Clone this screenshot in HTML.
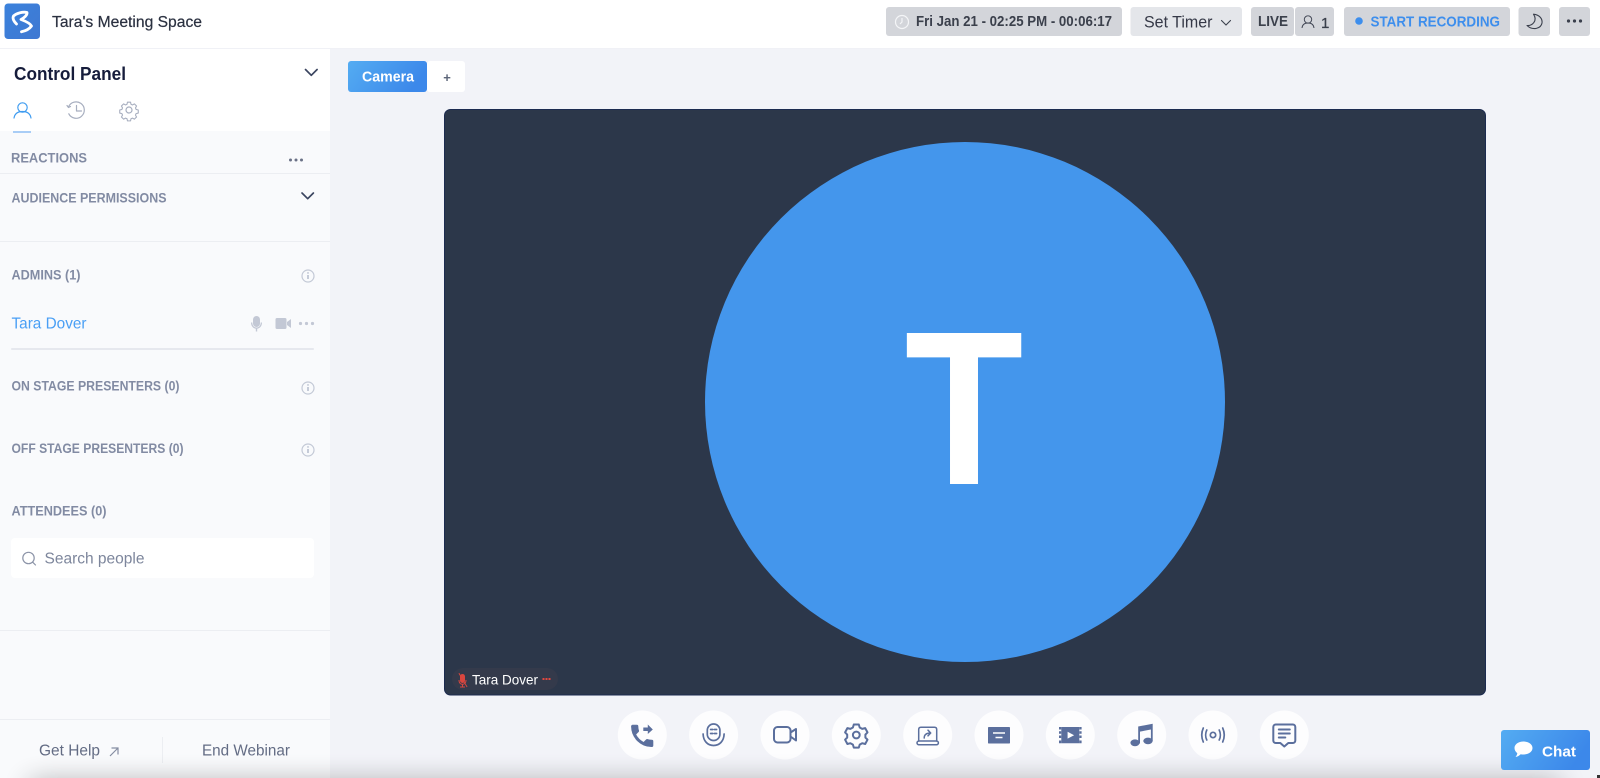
<!DOCTYPE html>
<html lang="en">
<head>
<meta charset="utf-8">
<title>Tara's Meeting Space</title>
<style>
html,body{margin:0;padding:0;width:1600px;height:778px;overflow:hidden;background:#f2f3f8}
svg{display:block}
text{font-family:"Liberation Sans",sans-serif;filter:url(#soft)}
.sec{font-size:13.5px;font-weight:700;fill:#828ba3}
.ic{fill:none;stroke:#5b6f9d;stroke-width:2;stroke-linecap:round;stroke-linejoin:round}
.fl{fill:#5b6f9d}
.info circle{fill:none;stroke:#c3c9d6;stroke-width:1.2}
.info path{stroke:#b4bbcb;stroke-width:1.5;fill:none}
</style>
</head>
<body>
<svg width="1600" height="778" viewBox="0 0 1600 778" xmlns="http://www.w3.org/2000/svg">
<defs>
<filter id="soft" x="-5%" y="-20%" width="110%" height="140%"><feGaussianBlur stdDeviation="0.25"/></filter>
<filter id="shade" x="-10%" y="-500%" width="120%" height="1100%"><feGaussianBlur stdDeviation="14"/></filter>
<linearGradient id="logoG" x1="0" y1="0" x2="1" y2="1"><stop offset="0" stop-color="#3b82dc"/><stop offset="1" stop-color="#3f78d2"/></linearGradient>
<linearGradient id="blueG" x1="0" y1="0" x2="1" y2="0.3"><stop offset="0" stop-color="#54acf2"/><stop offset="1" stop-color="#3c88ea"/></linearGradient>
</defs>

<!-- backgrounds -->
<rect width="1600" height="778" fill="#f2f3f8"/>

<!-- sidebar -->
<g id="sidebar">
<rect x="0" y="48" width="330" height="730" fill="#f9fafc"/>
<rect x="0" y="48" width="330" height="83" fill="#fff"/>
<text x="14" y="80" font-size="18" font-weight="700" fill="#141d3a" textLength="112" lengthAdjust="spacingAndGlyphs">Control Panel</text>
<path d="M305.500 69.500l5.800 5.800 5.800-5.800" fill="none" stroke="#3b4560" stroke-width="1.700" stroke-linecap="round" stroke-linejoin="round"/>
<!-- tabs -->
<g fill="none" stroke="#3d9bf0" stroke-width="1.150" stroke-linecap="round">
<circle cx="22.500" cy="107.500" r="4.700"/>
<path d="M14 118c.8-4.500 4.200-6.500 8.500-6.500s7.700 2 8.500 6.500"/>
</g>
<rect x="13" y="131" width="18" height="2" fill="#a9cdf6"/>
<g fill="none" stroke="#a7aebf" stroke-width="1.200" stroke-linecap="round" stroke-linejoin="round">
<path d="M68.500 107a8.200 8.200 0 1 1 .3 6.800"/>
<path d="M76.500 105.500v5.500h5"/>
<path d="M67 105.500l1.500 2 2-1"/>
<circle cx="129" cy="110" r="3"/>
<path d="M127.300 101.300h3.400l.5 2.300 1.700.8 2.100-1.200 2.400 2.400-1.200 2.100.7 1.700 2.400.6v3.400l-2.400.6-.7 1.700 1.200 2.100-2.400 2.400-2.100-1.200-1.700.7-.5 2.400h-3.400l-.5-2.400-1.700-.7-2.100 1.200-2.400-2.400 1.200-2.100-.7-1.700-2.400-.6v-3.400l2.400-.6.7-1.700-1.200-2.100 2.400-2.400 2.100 1.200 1.700-.8z" transform="translate(12.900 11) scale(.9)"/>
</g>
<!-- reactions -->
<text class="sec" x="11" y="162.500" textLength="76" lengthAdjust="spacingAndGlyphs">REACTIONS</text>
<g fill="#6a7186"><circle cx="290.500" cy="160" r="1.500"/><circle cx="296" cy="160" r="1.500"/><circle cx="301.500" cy="160" r="1.500"/></g>
<rect x="0" y="173" width="330" height="1" fill="#eceef2"/>
<text class="sec" x="11.500" y="202.500" textLength="155" lengthAdjust="spacingAndGlyphs">AUDIENCE PERMISSIONS</text>
<path d="M302 193l5.700 5.700 5.700-5.700" fill="none" stroke="#3b4560" stroke-width="1.700" stroke-linecap="round" stroke-linejoin="round"/>
<rect x="0" y="241" width="330" height="1" fill="#eceef2"/>
<!-- admins -->
<text class="sec" x="11.500" y="279.500" textLength="69" lengthAdjust="spacingAndGlyphs">ADMINS (1)</text>
<g class="info"><circle cx="308" cy="276" r="6"/><path d="M308 275v4M308 272.300v1.300"/></g>
<text x="11.500" y="328.500" font-size="16" fill="#4a9ff5" textLength="75" lengthAdjust="spacingAndGlyphs">Tara Dover</text>
<g fill="#c3c8d5">
<rect x="253" y="316" width="7" height="11" rx="3.500"/>
<path d="M251 322.500h1.300c0 3 1.700 5 4.200 5s4.200-2 4.200-5h1.300c0 3.400-2 5.800-4.800 6.200v2.800h-1.400v-2.800c-2.800-.4-4.800-2.800-4.800-6.200z"/>
<rect x="275.500" y="318" width="11" height="11" rx="1.500"/>
<path d="M287 322l4-3v9l-4-3z"/>
<circle cx="300.500" cy="323.500" r="1.600"/><circle cx="306.500" cy="323.500" r="1.600"/><circle cx="312.500" cy="323.500" r="1.600"/>
</g>
<rect x="11" y="348" width="303" height="2" rx="1" fill="#e6e8ee"/>
<text class="sec" x="11.500" y="390.500" textLength="168" lengthAdjust="spacingAndGlyphs">ON STAGE PRESENTERS (0)</text>
<g class="info"><circle cx="308" cy="388" r="6"/><path d="M308 387v4M308 384.300v1.300"/></g>
<text class="sec" x="11.500" y="453" textLength="172" lengthAdjust="spacingAndGlyphs">OFF STAGE PRESENTERS (0)</text>
<g class="info"><circle cx="308" cy="450" r="6"/><path d="M308 449v4M308 446.300v1.300"/></g>
<text class="sec" x="11.500" y="515.500" textLength="95" lengthAdjust="spacingAndGlyphs">ATTENDEES (0)</text>
<!-- search -->
<rect x="11" y="538" width="303" height="40" rx="4" fill="#fff"/>
<g fill="none" stroke="#8b93a7" stroke-width="1.200" stroke-linecap="round"><circle cx="28.500" cy="558" r="5.700"/><path d="M32.800 562.300l2.700 2.700"/></g>
<text x="44.500" y="563.500" font-size="15.500" fill="#7d869c" textLength="100" lengthAdjust="spacingAndGlyphs">Search people</text>
<rect x="0" y="630" width="330" height="1" fill="#eceef2"/>
<!-- footer -->
<rect x="0" y="719" width="330" height="1" fill="#eceef2"/>
<rect x="162" y="737" width="1" height="26" fill="#eceef2"/>
<text x="39" y="755.500" font-size="15.500" fill="#636c84" textLength="61" lengthAdjust="spacingAndGlyphs">Get Help</text>
<path d="M110 756l8-8M111.500 748h6.500v6.500" fill="none" stroke="#858da2" stroke-width="1.200"/>
<text x="202" y="755.500" font-size="15.500" fill="#636c84" textLength="88" lengthAdjust="spacingAndGlyphs">End Webinar</text>
</g>

<!-- topbar -->
<g id="topbar">
<rect width="1600" height="48" fill="#fff"/>
<rect x="0" y="48" width="1600" height="1" fill="#f0f1f6"/>
<rect x="4.500" y="3.500" width="35.500" height="35.500" rx="3.500" fill="url(#logoG)"/>
<path d="M16.500 24C13.500 21 12.500 18 13.500 16C17 13 23 11.500 27 12.500C27.500 15 24 18 21 19.500C25 21 30 23 31.500 26C29 29.500 25 31 21.500 31.800" fill="none" stroke="#fff" stroke-width="2.800" stroke-linejoin="round" stroke-linecap="round"/>
<text x="52" y="27" font-size="15.500" fill="#2b3040" stroke="#2b3040" stroke-width=".2" textLength="150" lengthAdjust="spacingAndGlyphs">Tara's Meeting Space</text>

<rect x="886" y="7" width="236" height="29" rx="3" fill="#d3d5da"/>
<g fill="none" stroke="#f4f5f7" stroke-width="1.200"><circle cx="902" cy="22" r="6.500"/><path d="M902 18v4l-2 2"/></g>
<text x="916" y="26" font-size="15" font-weight="700" fill="#3a3f4c" textLength="196" lengthAdjust="spacingAndGlyphs">Fri Jan 21 - 02:25 PM - 00:06:17</text>

<rect x="1130.500" y="7" width="111.500" height="29" rx="3" fill="#e4e6ea"/>
<text x="1144" y="27.500" font-size="17" fill="#343946" textLength="68.500" lengthAdjust="spacingAndGlyphs">Set Timer</text>
<path d="M1221.500 20.500l4.500 4.500 4.500-4.500" fill="none" stroke="#3a3f4c" stroke-width="1.100" stroke-linecap="round"/>

<rect x="1251" y="7" width="43" height="29" rx="3" fill="#d3d5da"/>
<rect x="1295" y="7" width="39" height="29" rx="3" fill="#d3d5da"/>
<text x="1258" y="26" font-size="15" font-weight="700" fill="#3a3f4c" textLength="30" lengthAdjust="spacingAndGlyphs">LIVE</text>
<g fill="none" stroke="#3f4452" stroke-width=".95"><circle cx="1308" cy="19.500" r="3.700"/><path d="M1302 28c.4-3.500 2.800-5 6-5s5.600 1.500 6 5"/></g>
<text x="1321" y="28" font-size="15" fill="#3a3f4c" stroke="#3a3f4c" stroke-width=".25">1</text>

<rect x="1344" y="7" width="166" height="29" rx="3" fill="#d3d5da"/>
<circle cx="1359" cy="21" r="3.800" fill="#3d8eed"/>
<text x="1370.500" y="26.500" font-size="15" font-weight="700" fill="#3d8eed" textLength="129.500" lengthAdjust="spacingAndGlyphs">START RECORDING</text>

<rect x="1518.500" y="7" width="31.500" height="29" rx="3" fill="#d3d5da"/>
<path d="M1533.500 14.200C1540 15 1542.500 19 1542 23C1541 28.500 1533 31 1527 25.500C1532 26 1538 21 1533.500 14.200z" fill="none" stroke="#3a3f4c" stroke-width="1.100" stroke-linejoin="round"/>
<rect x="1559" y="7" width="31" height="29" rx="3" fill="#d3d5da"/>
<g fill="#3a3f4c"><circle cx="1568.500" cy="21" r="1.600"/><circle cx="1574.500" cy="21" r="1.600"/><circle cx="1580.500" cy="21" r="1.600"/></g>
</g>

<!-- stage tabs -->
<rect x="427" y="61" width="38" height="31" rx="3" fill="#fff"/>
<rect x="348" y="61" width="79" height="31" rx="3" fill="url(#blueG)"/>
<text x="362" y="81.500" font-size="15" font-weight="700" fill="#fff" textLength="52" lengthAdjust="spacingAndGlyphs">Camera</text>
<text x="447" y="82" font-size="13" font-weight="700" fill="#5d6679" text-anchor="middle">+</text>

<!-- video -->
<rect x="444.500" y="109.500" width="1041" height="585.500" rx="6" fill="#2c374a" stroke="#1c2b50" stroke-width="1"/>
<circle cx="965" cy="402" r="260" fill="#4496ec"/>
<g filter="url(#soft)"><text transform="translate(964 484) scale(.885 1)" text-anchor="middle" font-size="219.500" font-weight="700" fill="#fff" style="filter:none">T</text></g>
<rect x="452" y="668" width="106" height="22" rx="11" fill="#343a4b"/>
<g fill="#d9463f"><rect x="460" y="674" width="5" height="9" rx="2.500"/><path d="M458.500 680h1c0 2.500 1.200 3.800 3 3.800s3-1.300 3-3.800h1c0 3-1.500 4.500-3.500 4.700v1.800h2v1h-5v-1h2v-1.800c-2-.2-3.500-1.700-3.500-4.700z"/><path d="M458.500 673.500l.8-.6 8.200 13.800-.8.600z"/></g>
<text x="472" y="684.500" font-size="14" fill="#fff" textLength="66" lengthAdjust="spacingAndGlyphs">Tara Dover</text>
<g fill="#e2483f"><rect x="542.500" y="678" width="2" height="2"/><rect x="545.500" y="678" width="2" height="2"/><rect x="548.500" y="678" width="2" height="2"/></g>

<!-- bottom controls -->
<g fill="#fdfdfe">
<circle cx="642.300" cy="735" r="24.500"/><circle cx="713.600" cy="735" r="24.500"/><circle cx="785" cy="735" r="24.500"/><circle cx="856.300" cy="735" r="24.500"/><circle cx="927.700" cy="735" r="24.500"/><circle cx="999" cy="735" r="24.500"/><circle cx="1070.300" cy="735" r="24.500"/><circle cx="1141.700" cy="735" r="24.500"/><circle cx="1213" cy="735" r="24.500"/><circle cx="1284.300" cy="735" r="24.500"/>
</g>
<!-- phone -->
<g transform="translate(642.300 735)">
<path class="fl" stroke="#5b6f9d" stroke-width=".5" stroke-linejoin="round" transform="translate(-14.500 -13.500) scale(1.200)" d="M6.620 10.790c1.440 2.830 3.760 5.140 6.590 6.590l2.200-2.200c.27-.27.670-.36 1.020-.24 1.120.37 2.330.57 3.570.57.550 0 1 .45 1 1V20c0 .55-.45 1-1 1-9.390 0-17-7.610-17-17 0-.55.45-1 1-1h3.500c.55 0 1 .45 1 1 0 1.250.2 2.450.57 3.570.11.350.03.740-.25 1.020l-2.200 2.200z"/>
<path class="fl" d="M1-7.500h4.500V-10.500L10.500-5.500 5.500-1V-4H1z"/>
</g>
<!-- mic -->
<g transform="translate(713.600 735)" class="ic" style="stroke-width:1.700">
<rect x="-6.300" y="-11" width="12.600" height="16.500" rx="6.300"/>
<path d="M-3-5.500H-.8M.8-5.500H3M-3-1.500H-.8M.8-1.500H3"/>
<path d="M-10.500-1C-10.300 6-6 10.500 0 10.500S10.300 6 10.500-1"/>
</g>
<!-- camera -->
<g transform="translate(785 735)" class="ic">
<rect x="-11" y="-8" width="16.500" height="15.500" rx="3.500"/>
<path d="M5.500-2.500L11-6v11.500L5.500 1.500"/>
</g>
<!-- gear -->
<g transform="translate(856.300 735)" class="ic">
<circle cx="0" cy="0" r="3.400"/>
<path d="M-2.500-10.500h5l.9 3 2.500 1.400 3-.8 2.300 4.300-2.100 2.200v2.900l2.100 2.200-2.300 4.300-3-.8-2.500 1.400-.9 3h-5l-.9-3-2.500-1.400-3 .8-2.300-4.300 2.100-2.200v-2.900l-2.100-2.200 2.300-4.300 3 .8 2.500-1.400z"/>
</g>
<!-- share -->
<g transform="translate(927.700 735)" class="ic" style="stroke-width:1.500">
<path d="M-9 6V-5.500c0-1.400.8-2.300 2.200-2.300H6.800c1.400 0 2.200.9 2.200 2.300V6"/>
<rect x="-10.700" y="6" width="21.400" height="3.800" rx="1.900"/>
<path d="M-3.500 3c0-3 2-5 6.500-5M0.300-4.800L3-2 .3 .8"/>
</g>
<!-- caption -->
<g transform="translate(999 735)">
<rect class="fl" x="-11" y="-8" width="22" height="16.500" rx=".8"/>
<path d="M-6-2H6M-3.500 2.500H3.500" stroke="#fff" stroke-width="1.400"/>
</g>
<!-- film -->
<g transform="translate(1070.300 735)">
<path class="fl" d="M-9-8H9V8.300H-9z"/>
<path class="fl" d="M-11.300-8H-9v2.500h-2.300zM-11.300-3.800H-9v2.500h-2.300zM-11.300 .5H-9V3h-2.300zM-11.300 5.500H-9V8.300h-2.300zM9-8h2.300v2.500H9zM9-3.800h2.300v2.500H9zM9 .5h2.300V3H9zM9 5.500h2.300V8.300H9z"/>
<path d="M-2.700-3.200L3.800 .2-2.700 3.600z" fill="#fff"/>
</g>
<!-- music -->
<g transform="translate(1141.700 735)" class="fl">
<path d="M-3.500-8.500L11-11.300V6H9.200V-5.500L-1.700-3.400V8.500H-3.500z"/>
<ellipse cx="-6.700" cy="7.800" rx="4.600" ry="3.400"/>
<ellipse cx="6.300" cy="5.900" rx="4.700" ry="3.300"/>
</g>
<!-- broadcast -->
<g transform="translate(1213 735)" class="ic" style="stroke-width:1.700">
<circle cx="0" cy="0" r="2.700"/>
<path d="M-6.200-5c-1.500 3-1.500 7 0 10M6.200-5c1.500 3 1.500 7 0 10M-9.700-7c-2 4.500-2 9.500 0 14M9.700-7c2 4.500 2 9.500 0 14"/>
</g>
<!-- message -->
<g transform="translate(1284.300 735)" class="ic">
<path d="M-8.500-10.500H8.500c1.400 0 2.500 1.100 2.500 2.500V5.500c0 1.400-1.100 2.500-2.500 2.500H4L0 11.500-4 8H-8.500C-9.900 8-11 6.900-11 5.500V-8c0-1.400 1.100-2.500 2.500-2.500z"/>
<path d="M-5.500-5.500H5.500M-5.500-1.500H5.500M-5.500 2.500H1"/>
</g>

<!-- bottom shade -->
<rect x="30" y="784" width="1530" height="14" fill="#000" opacity=".45" filter="url(#shade)"/>
<rect x="1597" y="775" width="3" height="3" fill="#333"/>

<!-- chat -->
<g id="chat">
<rect x="1501" y="730" width="89" height="40" rx="3" fill="url(#blueG)"/>
<path d="M1523.500 741.500c5.200 0 9 2.900 9 6.500s-3.800 6.500-9 6.500c-1 0-1.900-.1-2.800-.3-1.300 1.300-3 2.300-5.200 2.800 1-1.100 1.600-2.400 1.800-3.900-1.700-1.200-2.800-3-2.800-5.100 0-3.600 3.800-6.500 9-6.500z" fill="#fff"/>
<text x="1542" y="756.500" font-size="15" font-weight="700" fill="#fff" textLength="34" lengthAdjust="spacingAndGlyphs">Chat</text>
</g>
</svg>
</body>
</html>
